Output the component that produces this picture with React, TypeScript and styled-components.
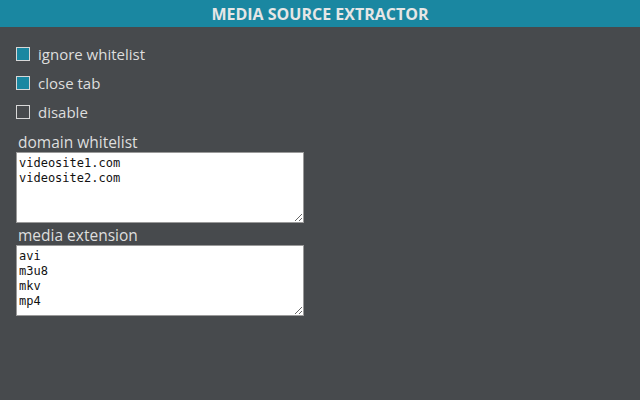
import React, { useState } from 'react'
import styled, { createGlobalStyle } from 'styled-components'

const GlobalStyle = createGlobalStyle`
  html, body {
    margin: 0;
    padding: 0;
    background: #474a4d;
    height: 100%;
  }
  body {
    font-family: 'Open Sans', 'Noto Sans', sans-serif;
  }
`

const Page = styled.div`
  width: 640px;
  height: 400px;
  background: #474a4d;
  color: #dcdcdc;
`

const Header = styled.div`
  height: 27px;
  background: #1a87a1;
  display: flex;
  align-items: center;
  justify-content: center;
  color: #e6e6e6;
  font-size: 16px;
  font-weight: 700;
`

const Body = styled.div`
  padding: 12px 16px 0 16px;
  display: flex;
  flex-direction: column;
`

const CheckRow = styled.label`
  display: flex;
  align-items: center;
  height: 29px;
  font-size: 15px;
  color: #dedede;
  cursor: pointer;
`

const Box = styled.input`
  appearance: none;
  margin: 0 8px 0 0;
  width: 14px;
  height: 14px;
  box-sizing: border-box;
  border: 1px solid #d8d8d8;
  background: transparent;
  &:checked {
    background: #1a87a1;
  }
`

const Field = styled.div`
  display: flex;
  flex-direction: column;
  margin-top: ${({ $top }: { $top: number }) => $top}px;
`

const FieldLabel = styled.div`
  font-size: 15.5px;
  color: #dedede;
  padding-left: 2px;
  line-height: 19px;
`

const Area = styled.textarea`
  width: 288px;
  height: 71px;
  box-sizing: border-box;
  margin: 0;
  padding: 3px 2px 1px;
  border: 1px solid #9a9a9a;
  background: #fff;
  color: #111;
  font-family: 'DejaVu Sans Mono', 'Liberation Mono', monospace;
  font-size: 12px;
  line-height: 15px;
  outline: none;
`

const options = [
  { key: 'ignore', label: 'ignore whitelist', on: true },
  { key: 'close', label: 'close tab', on: true },
  { key: 'disable', label: 'disable', on: false },
]

const App = () => {
  const [checks, setChecks] = useState<Record<string, boolean>>(
    Object.fromEntries(options.map((o) => [o.key, o.on]))
  )
  const [domains, setDomains] = useState('videosite1.com\nvideosite2.com')
  const [exts, setExts] = useState('avi\nm3u8\nmkv\nmp4')

  return (
    <Page>
      <GlobalStyle />
      <Header>MEDIA SOURCE EXTRACTOR</Header>
      <Body>
        {options.map((o) => (
          <CheckRow key={o.key}>
            <Box
              type="checkbox"
              checked={checks[o.key]}
              onChange={(e) => setChecks({ ...checks, [o.key]: e.target.checked })}
            />
            {o.label}
          </CheckRow>
        ))}
        <Field $top={7}>
          <FieldLabel>domain whitelist</FieldLabel>
          <Area value={domains} onChange={(e) => setDomains(e.target.value)} spellCheck={false} />
        </Field>
        <Field $top={3}>
          <FieldLabel>media extension</FieldLabel>
          <Area value={exts} onChange={(e) => setExts(e.target.value)} spellCheck={false} />
        </Field>
      </Body>
    </Page>
  )
}

export default App
